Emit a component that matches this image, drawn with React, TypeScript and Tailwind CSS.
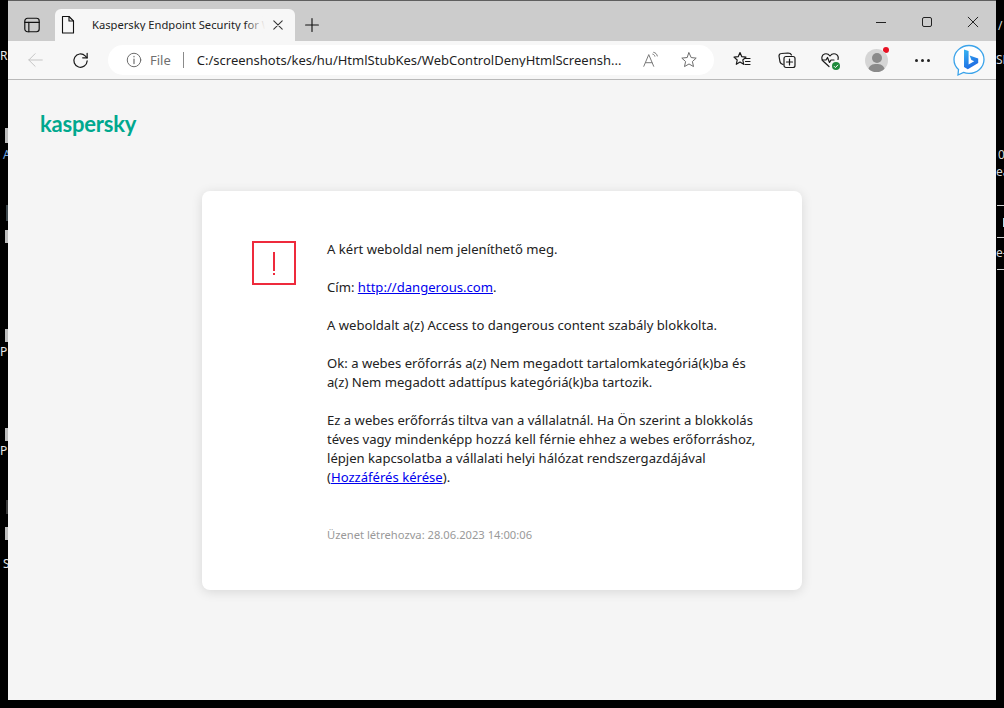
const uiFont = { fontFamily: '"Noto Sans", "Open Sans", sans-serif' };

function Stray({ className, children }: { className: string; children?: React.ReactNode }) {
  return <span className={`absolute leading-none ${className}`}>{children}</span>;
}

function LeftEdge() {
  return (
    <div className="relative w-2 shrink-0 overflow-hidden text-[12px] text-[#e8e8e8]">
      <Stray className="top-[50px] left-0">R</Stray>
      <Stray className="top-[128px] left-[5px] h-[15px] w-[3px] bg-[#bdbdbd]" />
      <Stray className="top-[149px] left-[3px] text-[#6fa8e0]">A</Stray>
      <Stray className="top-[205px] left-[6px] h-[16px] w-[2px] bg-[#3d474c]" />
      <Stray className="top-[230px] left-[5px] h-[13px] w-[3px] bg-[#bdbdbd]" />
      <Stray className="top-[329px] left-[5px] h-[13px] w-[3px] bg-[#bdbdbd]" />
      <Stray className="top-[346px] left-0">P</Stray>
      <Stray className="top-[428px] left-[5px] h-[13px] w-[3px] bg-[#bdbdbd]" />
      <Stray className="top-[445px] left-0">P</Stray>
      <Stray className="top-[500px] left-[6px] h-[14px] w-[2px] bg-[#3a3a3a]" />
      <Stray className="top-[527px] left-[5px] h-[13px] w-[3px] bg-[#bdbdbd]" />
      <Stray className="top-[558px] left-[3px]">S</Stray>
    </div>
  );
}

function RightEdge() {
  return (
    <div className="relative w-2 shrink-0 overflow-hidden text-[12px] text-[#d8d8d8]">
      <Stray className="top-[20px] left-[2px]">/</Stray>
      <Stray className="top-[54px] left-0">SH</Stray>
      <Stray className="top-[149px] left-[2px]">0</Stray>
      <Stray className="top-[166px] left-0">ea</Stray>
      <Stray className="top-[205px] left-[1px] h-px w-[7px] bg-[#cfcfcf]" />
      <Stray className="top-[218px] left-[7px] h-[9px] w-px bg-[#a8d8e8]" />
      <Stray className="top-[237px] left-[1px] h-px w-[7px] bg-[#cfcfcf]" />
      <Stray className="top-[247px] left-0">e-</Stray>
      <Stray className="top-[269px] left-[1px] h-px w-[7px] bg-[#cfcfcf]" />
    </div>
  );
}

function Icon({ size = 20, className, children }: { size?: number; className?: string; children: React.ReactNode }) {
  return (
    <svg
      width={size}
      height={size}
      viewBox="0 0 20 20"
      fill="none"
      stroke="currentColor"
      strokeWidth="1.1"
      strokeLinecap="round"
      strokeLinejoin="round"
      className={className}
    >
      {children}
    </svg>
  );
}

function TabStrip() {
  return (
    <div className="flex h-10 items-end bg-[#cccccc] text-[#111111]">
      <div className="flex h-8 w-[47px] items-center justify-center">
        <Icon size={18}>
          <rect x="2" y="2.500" width="16" height="15" rx="3" strokeWidth="1.3" />
          <path d="M2 7h16" strokeWidth="1.3" />
          <path d="M6.500 7v10.500" strokeWidth="1.3" />
        </Icon>
      </div>
      <div className="relative flex h-8 w-[240px] items-center rounded-t-[6px] bg-[#f7f7f7]">
        <Icon size={20} className="ml-[3px] shrink-0">
          <path d="M4.500 1.500h6.500l4.500 4.500v12h-11z" />
          <path d="M11 1.500v4.500h4.500" />
        </Icon>
        <span className="ml-[14px] w-[173px] overflow-hidden whitespace-nowrap text-[11.2px] leading-none text-[#222222]">
          Kaspersky Endpoint Security for Web Control
        </span>
        <div className="absolute top-0 left-[190px] h-full w-[20px] bg-linear-to-r from-transparent to-[#f7f7f7]" />
        <Icon size={12} className="ml-[7px] text-[#333333]">
          <path d="M3 3l14 14M17 3L3 17" strokeWidth="1.8" />
        </Icon>
      </div>
      <div className="flex h-8 w-[34px] items-center justify-center">
        <Icon size={16}>
          <path d="M10 2v16M2 10h16" strokeWidth="1.4" />
        </Icon>
      </div>
      <div className="ml-auto flex h-10 items-start pt-[13px]">
        <div className="flex h-4 w-[46px] items-center justify-center">
          <div className="h-px w-[10px] bg-[#222222]" />
        </div>
        <div className="flex h-4 w-[46px] items-center justify-center">
          <div className="h-[10px] w-[10px] rounded-[2px] border border-[#222222]" />
        </div>
        <div className="flex h-4 w-[46px] items-center justify-center">
          <Icon size={12}>
            <path d="M2 2l16 16M18 2L2 18" strokeWidth="1.5" />
          </Icon>
        </div>
      </div>
    </div>
  );
}

function BingButton() {
  return (
    <svg width="32" height="33" viewBox="0 0 32 33" fill="none">
      <defs>
        <linearGradient id="bingB" x1="10" y1="6" x2="22" y2="26" gradientUnits="userSpaceOnUse">
          <stop offset="0" stopColor="#38b6f2" />
          <stop offset="1" stopColor="#1a5fe0" />
        </linearGradient>
      </defs>
      <path
        d="M16 1.500C8 1.500 1 7.800 1 15.500c0 4 1.600 7.500 4.500 10L5 31l5.500-2.600c1.700.7 3.600 1 5.500 1 8 0 15-6 15-13.900S24 1.500 16 1.500z"
        fill="#ffffff"
        stroke="#3aa3ea"
        strokeWidth="1.3"
      />
      <path
        d="M11 5.500l4.600 1.600v13.400l5.600-3.200-2.800-1.300-1.800-4.500 8.600 3v4.600l-10.400 6.200-3.800-2.200z"
        fill="url(#bingB)"
      />
    </svg>
  );
}

function Toolbar() {
  return (
    <div className="flex h-[39px] items-center border-b border-[#b9b9b9] bg-[#f7f7f7] text-[#1a1a1a]">
      <div className="flex w-[56px] justify-center text-[#c4c4c4]">
        <Icon size={18}>
          <path d="M17 10H2M9 3l-7 7 7 7" />
        </Icon>
      </div>
      <div className="flex w-[32px] justify-center">
        <Icon size={19}>
          <path d="M17 10.500a7 7 0 1 1-2.100-5.400l2.100 2.100" strokeWidth="1.3" />
          <path d="M17 2.500v4.700h-4.700" strokeWidth="1.3" />
        </Icon>
      </div>
      <div className="ml-[12px] flex h-[30px] w-[606px] items-center rounded-full bg-white">
        <Icon size={18} className="ml-[17px] shrink-0 text-[#6a6a6a]">
          <circle cx="10" cy="10" r="7.500" />
          <path d="M10 9v5M10 6v.5" strokeWidth="1.3" />
        </Icon>
        <span className="ml-[7px] text-[13px] leading-none text-[#6f6f6f]">File</span>
        <div className="ml-[12px] h-[16px] w-px bg-[#8a8a8a]" />
        <span className="ml-[13px] w-[429px] overflow-hidden whitespace-nowrap text-[13px] leading-none text-[#1f1f1f]">
          C:/screenshots/kes/hu/HtmlStubKes/WebControlDenyHtmlScreensh...
        </span>
        <Icon size={18} className="ml-[16px] shrink-0 text-[#777777]">
          <path d="M2 17L7.500 4 13 17M4 13h7" />
          <path d="M12 3.500c1.200.3 2 1.100 2.300 2.300M13 1.500c2.200.5 3.500 1.800 4 4" />
        </Icon>
        <Icon size={18} className="ml-[20px] shrink-0 text-[#6a6a6a]">
          <path d="M10 2l2.400 5.300 5.600.6-4.200 3.800 1.200 5.600-5-2.900-5 2.900 1.200-5.600L2 7.900l5.600-.6z" />
        </Icon>
      </div>
      <div className="flex items-center pl-[18px]">
        <Icon size={20}>
          <path d="M8 2.500l1.800 4.200 4.200.4-3.200 2.900.9 4.300-3.700-2.200-3.700 2.200.9-4.300L2 7.100l4.200-.4z" strokeWidth="1.2" />
          <path d="M13 8.500h5M13.500 11.500h4.500M13 14.500h5" strokeWidth="1.2" />
        </Icon>
        <Icon size={20} className="ml-[25px]">
          <path d="M6 14.500c-1.500-.5-2.500-1-3-2.500L2 6c0-1.500 1-2.500 2.500-2.500l6.500-.5c1.500 0 3 .5 3.500 2" strokeWidth="1.2" />
          <rect x="7" y="6.500" width="11" height="11" rx="2" strokeWidth="1.2" />
          <path d="M12.500 9v6M9.500 12h6" strokeWidth="1.2" />
        </Icon>
        <div className="relative ml-[23px] h-5 w-5">
          <Icon size={20}>
            <path d="M9 16.500L3 11C1 9 1.500 5 4.500 4c2-.6 4 0 5.500 2 1.500-2 3.500-2.600 5.500-2 2.500.8 3.200 3.500 2.500 5.500" strokeWidth="1.2" />
            <path d="M2 10h4l1.500-2.500 2 5 1.500-2.500h3" strokeWidth="1.2" />
          </Icon>
          <svg width="8" height="8" viewBox="0 0 8 8" className="absolute right-0 bottom-0">
            <circle cx="4" cy="4" r="4" fill="#1e8a3c" />
            <path d="M2 4.200l1.400 1.400L6 2.800" fill="none" stroke="#ffffff" strokeWidth="1" />
          </svg>
        </div>
        <div className="relative ml-[25px] flex h-[23px] w-[23px] justify-center overflow-hidden rounded-full bg-[#d5d5d5]">
          <div className="absolute top-[4px] h-[10px] w-[10px] rounded-full bg-[#8a8a8a]" />
          <div className="absolute top-[15px] h-[14px] w-[17px] rounded-full bg-[#8a8a8a]" />
        </div>
        <div className="ml-[-5px] mt-[-21px] h-[6px] w-[6px] rounded-full bg-[#e81123]" />
        <div className="ml-[25px] flex w-[16px] justify-center gap-[3px]">
          <div className="h-[3px] w-[3px] rounded-full bg-[#222222]" />
          <div className="h-[3px] w-[3px] rounded-full bg-[#222222]" />
          <div className="h-[3px] w-[3px] rounded-full bg-[#222222]" />
        </div>
        <div className="ml-[23px]">
          <BingButton />
        </div>
      </div>
    </div>
  );
}

function BlockedCard() {
  return (
    <div className="mx-auto mt-[54px] flex h-[399px] w-[600px] rounded-[8px] bg-white pt-[50px] pl-[50px] shadow-[0_2px_12px_rgba(0,0,0,0.12)]">
      <div className="flex h-[44px] w-[44px] shrink-0 flex-col items-center justify-center gap-[2px] border-2 border-[#ee2a3c] bg-white">
        <div className="h-[19px] w-[2px] bg-[#ee2a3c]" />
        <div className="h-[2px] w-[2px] bg-[#ee2a3c]" />
      </div>
      <div className="ml-[31px] mt-[-1px] w-[440px] text-[13.1px] leading-[19px] text-[#222222]">
        <p>A kért weboldal nem jeleníthető meg.</p>
        <p className="mt-[19px]">
          Cím:{" "}
          <a href="#" className="text-[#0000ee] underline">
            http://dangerous.com
          </a>
          .
        </p>
        <p className="mt-[19px]">A weboldalt a(z) Access to dangerous content szabály blokkolta.</p>
        <p className="mt-[19px]">
          Ok: a webes erőforrás a(z) Nem megadott tartalomkategóriá(k)ba és
          <br />
          a(z) Nem megadott adattípus kategóriá(k)ba tartozik.
        </p>
        <p className="mt-[19px]">
          Ez a webes erőforrás tiltva van a vállalatnál. Ha Ön szerint a blokkolás
          <br />
          téves vagy mindenképp hozzá kell férnie ehhez a webes erőforráshoz,
          <br />
          lépjen kapcsolatba a vállalati helyi hálózat rendszergazdájával
          <br />(
          <a href="#" className="text-[#0000ee] underline">
            Hozzáférés kérése
          </a>
          ).
        </p>
        <p className="mt-[38px] text-[11.2px] text-[#999999]">Üzenet létrehozva: 28.06.2023 14:00:06</p>
      </div>
    </div>
  );
}

export default function App() {
  return (
    <div className="flex h-[708px] w-[1004px] overflow-hidden bg-black pb-2" style={uiFont}>
      <LeftEdge />
      <div className="flex min-w-0 flex-1 flex-col">
        <div className="h-px bg-[#5f5f5f]" />
        <TabStrip />
        <Toolbar />
        <div className="flex-1 bg-[#f5f5f5]">
          <div className="pt-[30px] pl-[32px]">
            <span
              className="block text-[22px] leading-[27px] font-bold tracking-[-0.2px] text-[#00a88e]"
              style={{ fontFamily: '"Lato", sans-serif' }}
            >
              kaspersky
            </span>
          </div>
          <BlockedCard />
        </div>
      </div>
      <RightEdge />
    </div>
  );
}
